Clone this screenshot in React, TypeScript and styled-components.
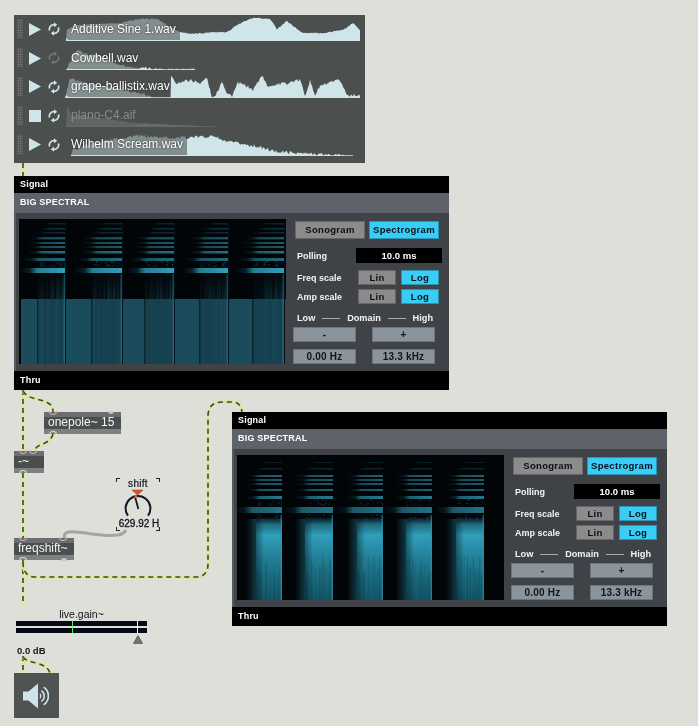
import styled, { createGlobalStyle } from 'styled-components'

const GlobalStyle = createGlobalStyle`
  html, body {
    margin: 0;
    padding: 0;
    background: #dedfd9;
  }
  body {
    font-family: "Liberation Sans", Arial, sans-serif;
  }
`

type Pt = [number, number]

// envelope points: [x px from wave start, height px]
const TRACKS: { name: string; chip: number; wave: Pt[]; jitter: number; stopped?: boolean }[] = [
  {
    name: 'Additive Sine 1.wav',
    chip: 114,
    jitter: 0.6,
    wave: [[1, 0], [2, 11], [12, 16], [32, 17], [55, 18], [75, 22], [92, 22], [102, 16], [115, 9], [128, 7], [148, 9], [162, 9], [172, 16], [182, 21], [188, 23], [205, 22], [212, 12], [222, 20], [232, 12], [238, 8], [258, 8], [278, 11], [288, 18], [295, 11]],
  },
  {
    name: 'Cowbell.wav',
    chip: 73,
    jitter: 1.3,
    wave: [[1, 0], [5, 8], [12, 20], [20, 16], [32, 14], [40, 11], [52, 6], [68, 2.5], [95, 1], [130, 0.7], [130, 0]],
  },
  {
    name: 'grape-ballistix.wav',
    chip: 105,
    jitter: 1.6,
    wave: [[0, 0], [5, 20], [28, 13], [52, 10], [82, 3], [88, 0], [105, 0], [105.5, 23], [110, 15], [125, 18], [135, 15], [142, 20], [147, 0], [150, 1], [157, 17], [162, 5], [167, 2], [173, 15], [182, 12], [188, 8], [197, 23], [202, 12], [222, 15], [235, 18], [240, 3], [245, 17], [250, 3], [255, 12], [275, 18], [282, 3], [295, 3]],
  },
  {
    name: 'plano-C4.aif',
    chip: 70,
    jitter: 0.3,
    stopped: true,
    wave: [[1, 0], [2, 22], [6, 12], [35, 9], [70, 4], [115, 2], [150, 0]],
  },
  {
    name: 'Wilhelm Scream.wav',
    chip: 121,
    jitter: 1.6,
    wave: [[6, 0], [8, 6], [30, 14], [70, 20], [110, 18], [150, 20], [158, 15], [190, 10], [208, 5], [230, 3], [250, 2], [270, 1], [288, 0]],
  },
]

function noise(seed: number) {
  const v = Math.sin(seed * 127.1 + 311.7) * 43758.5453
  return v - Math.floor(v)
}

function wavePoints(wave: Pt[], jitter: number, row: number) {
  const pts: string[] = []
  const end = wave[wave.length - 1][0]
  pts.push(`${wave[0][0]},26`)
  for (let x = wave[0][0]; x <= end; x += 1) {
    const i = wave.findIndex((p) => p[0] >= x)
    const b = wave[Math.max(i, 0)]
    const a = wave[Math.max(i - 1, 0)]
    const t = b[0] === a[0] ? 1 : (x - a[0]) / (b[0] - a[0])
    const h = a[1] + (b[1] - a[1]) * t
    const j = h > 0.5 ? (noise(x + row * 50) - 0.5) * jitter * 2 : 0
    pts.push(`${x},${(26 - Math.max(h + j, 0.8)).toFixed(1)}`)
  }
  pts.push(`${end},26`)
  return pts.join(' ')
}

function LoopIcon() {
  return (
    <svg width="12" height="14" viewBox="0 0 12 14">
      <path d="M1.6 8.6A4.6 4.6 0 0 1 6.6 2.6" fill="none" stroke="currentColor" strokeWidth="1.7" />
      <path d="M6 0.2 9.2 2.8 6 5.2Z" fill="currentColor" />
      <path d="M10.4 5.4A4.6 4.6 0 0 1 5.4 11.4" fill="none" stroke="currentColor" strokeWidth="1.7" />
      <path d="M6 8.8 2.8 11.2 6 13.8Z" fill="currentColor" />
    </svg>
  )
}

function Playlist() {
  return (
    <PlaylistWrap>
      {TRACKS.map((t, i) => (
        <TrackRow key={t.name}>
          <Grip />
          <TransportSlot>
            {t.stopped ? (
              <StopIcon />
            ) : (
              <svg width="12" height="13" viewBox="0 0 12 13">
                <path d="M0 0 12 6.5 0 13Z" fill="#cfe5ea" />
              </svg>
            )}
          </TransportSlot>
          <LoopSlot $dim={t.name === 'Cowbell.wav'}>
            <LoopIcon />
          </LoopSlot>
          <WaveSlot>
            <svg width="295" height="26" viewBox="0 0 295 26">
              <polygon points={wavePoints(t.wave, t.jitter, i)} fill={t.stopped ? '#656b6a' : '#cfe5ea'} />
            </svg>
            <TrackLabel $muted={t.stopped} $chip={t.chip}>
              {t.name}
            </TrackLabel>
          </WaveSlot>
        </TrackRow>
      ))}
    </PlaylistWrap>
  )
}

type Band = { y: number; h: number; o: number; back?: number; inset?: number }

type SpecConfig = {
  id: string
  starts: number[]
  ends: number[]
  bands: Band[]
  bright: boolean
}

const SPEC_A: SpecConfig = {
  id: 'a',
  starts: [19, 73, 126, 181, 234],
  ends: [46, 103, 155, 209, 265],
  bands: [
    { y: 4, h: 1.5, o: 0.2, inset: 14 },
    { y: 9, h: 1.5, o: 0.3, inset: 10 },
    { y: 13, h: 1.5, o: 0.25, inset: 6 },
    { y: 18, h: 2.5, o: 0.5 },
    { y: 23, h: 2, o: 0.55 },
    { y: 27, h: 2, o: 0.55 },
    { y: 32, h: 2.5, o: 0.7 },
    { y: 39, h: 3, o: 0.65, back: 6 },
    { y: 49, h: 5, o: 1, back: 8 },
  ],
  bright: false,
}

const SPEC_B: SpecConfig = {
  id: 'b',
  starts: [19, 68, 120, 169, 219],
  ends: [45, 96, 146, 195, 247],
  bands: [
    { y: 7, h: 1, o: 0.18, inset: 12 },
    { y: 13, h: 1.5, o: 0.22, inset: 6 },
    { y: 20, h: 2, o: 0.6 },
    { y: 24, h: 2, o: 0.55 },
    { y: 28, h: 2, o: 0.55 },
    { y: 34, h: 2, o: 0.6 },
    { y: 41, h: 3, o: 0.75 },
    { y: 52, h: 6, o: 0.7, back: 12 },
  ],
  bright: true,
}

function Spectrogram({ config }: { config: SpecConfig }) {
  const { id, starts, ends, bands, bright } = config
  return (
    <svg width="267" height="145" viewBox="0 0 267 145">
      <defs>
        <linearGradient id={`fade-${id}`} x1="0" x2="1" y1="0" y2="0">
          <stop offset="0" stopColor="#2f9bb3" stopOpacity="0" />
          <stop offset="0.22" stopColor="#2f9bb3" stopOpacity="0.18" />
          <stop offset="0.38" stopColor="#2f9bb3" stopOpacity="0.8" />
          <stop offset="1" stopColor="#32a0ba" stopOpacity="1" />
        </linearGradient>
        <linearGradient id={`tail-${id}`} x1="0" x2="0" y1="0" y2="1">
          <stop offset="0" stopColor="#1f7389" stopOpacity="0.15" />
          <stop offset="1" stopColor="#1f7389" stopOpacity="1" />
        </linearGradient>
        <linearGradient id={`glow-${id}`} x1="0" x2="0" y1="0" y2="1">
          <stop offset="0" stopColor="#2f9fbb" stopOpacity="0" />
          <stop offset="0.09" stopColor="#2d97b2" stopOpacity="0.7" />
          <stop offset="0.22" stopColor="#2f9fbb" stopOpacity="1" />
          <stop offset="0.5" stopColor="#237f96" stopOpacity="1" />
          <stop offset="1" stopColor="#15586b" stopOpacity="1" />
        </linearGradient>
        <linearGradient id={`apron-${id}`} x1="0" x2="1" y1="0" y2="0">
          <stop offset="0" stopColor="#1c6a80" stopOpacity="0" />
          <stop offset="1" stopColor="#1c6a80" stopOpacity="0.5" />
        </linearGradient>
        <linearGradient id={`side-${id}`} x1="0" x2="1" y1="0" y2="0">
          <stop offset="0" stopColor="#03141a" stopOpacity="0.45" />
          <stop offset="1" stopColor="#03141a" stopOpacity="0" />
        </linearGradient>
      </defs>
      <rect width="267" height="145" fill="#020508" />
      {!bright && <rect x="2" y="80" width="265" height="65" fill="#1b4c5b" />}
      {starts.map((s, i) => {
        const e = ends[i]
        const w = e - s
        const columns = Array.from({ length: w }, (_, k) => k)
        return (
          <g key={s}>
            {bands.map((b) => {
              const left = s - 10 - (b.back ?? 0) + (b.inset ?? 0)
              return <rect key={b.y} x={left} y={b.y} width={e - left} height={b.h} fill={`url(#fade-${id})`} opacity={b.o} />
            })}
            {Array.from({ length: 30 }, (_, k) => k).map((k) => (
              <rect
                key={`n${k}`}
                x={s + noise(k + i * 40) * w}
                y={bright ? (k % 2 ? 44 + noise(k * 3 + i) * 6 : 59 + noise(k * 3 + i) * 6) : 42 + noise(k * 3 + i) * 5}
                width={1.5}
                height={1.2}
                fill="#1f7389"
                opacity={0.15 + noise(k * 7) * 0.3}
              />
            ))}
            {bright ? (
              <>
                <rect x={s - 10} y={64} width={10} height={81} fill={`url(#apron-${id})`} />
                <rect x={s} y={62} width={w} height={83} fill={`url(#glow-${id})`} />
                <rect x={s} y={64} width={8} height={81} fill={`url(#side-${id})`} />
                {columns.map((k) => (
                  <rect
                    key={`s${k}`}
                    x={s + k}
                    y={100 + noise(k * 3 + i) * 20}
                    width={1}
                    height={45}
                    fill="#03181f"
                    opacity={noise(k * 2 + i * 11) * 0.18}
                  />
                ))}
              </>
            ) : (
              <>
                {columns.map((k) => (
                  <rect
                    key={`t${k}`}
                    x={s + k}
                    y={55}
                    width={1}
                    height={25}
                    fill={`url(#tail-${id})`}
                    opacity={(0.1 + noise(k * 5 + i * 3) * 0.4) * (0.3 + (0.7 * k) / w)}
                  />
                ))}
                <rect x={s} y={80} width={w} height={65} fill="#173f4d" opacity={0.75} />
                <rect x={s - 1} y={80} width={1.5} height={65} fill="#0c2630" />
                {columns.map((k) => (
                  <rect
                    key={`s${k}`}
                    x={s + k}
                    y={80}
                    width={1}
                    height={65}
                    fill={noise(k * 2 + i * 11) > 0.7 ? '#1f6a7e' : '#0f303b'}
                    opacity={noise(k + i * 5) * 0.18}
                  />
                ))}
              </>
            )}
            <rect x={e - 1.5} y={bright ? 60 : 55} width={1.5} height={bright ? 85 : 90} fill="#2f93ac" opacity={bright ? 0.6 : 0.4} />
            {!bright && <rect x={e} y={4} width={1} height={141} fill="#04121a" />}
          </g>
        )
      })}
    </svg>
  )
}

function SpectralPanel({ x, y, config }: { x: number; y: number; config: SpecConfig }) {
  return (
    <Panel $x={x} $y={y}>
      <BlackBar>Signal</BlackBar>
      <TitleBar>BIG SPECTRAL</TitleBar>
      <PanelBody>
        <Display>
          <Spectrogram config={config} />
        </Display>
        <Controls>
          <ModeRow>
            <Toggle $w={70} $h={18}>Sonogram</Toggle>
            <Toggle $w={70} $h={18} $active>Spectrogram</Toggle>
          </ModeRow>
          <PollingRow>
            <RowLabel>Polling</RowLabel>
            <PollValue>10.0 ms</PollValue>
          </PollingRow>
          <ScaleGroup>
            <ScaleRow>
              <RowLabel>Freq scale</RowLabel>
              <ScaleButtons>
                <Toggle $w={38} $h={15}>Lin</Toggle>
                <Toggle $w={38} $h={15} $active>Log</Toggle>
              </ScaleButtons>
            </ScaleRow>
            <ScaleRow>
              <RowLabel>Amp scale</RowLabel>
              <ScaleButtons>
                <Toggle $w={38} $h={15}>Lin</Toggle>
                <Toggle $w={38} $h={15} $active>Log</Toggle>
              </ScaleButtons>
            </ScaleRow>
          </ScaleGroup>
          <DomainRow>
            <span>Low</span>
            <DomainRule />
            <span>Domain</span>
            <DomainRule />
            <span>High</span>
          </DomainRow>
          <RangeGrid>
            <RangeCell>-</RangeCell>
            <RangeCell>+</RangeCell>
            <RangeCell>0.00 Hz</RangeCell>
            <RangeCell>13.3 kHz</RangeCell>
          </RangeGrid>
        </Controls>
      </PanelBody>
      <BlackBar $tall>Thru</BlackBar>
    </Panel>
  )
}

const CORDS = [
  'M23 163V176',
  'M23 390V451',
  'M23 391C28 400 40 398 48 403C52 405 53 408 53 412',
  'M53 434C51 443 40 444 37 447C35 449 34 450 34 451',
  'M23 473V538',
  'M23 560V605',
  'M23 562C23 572 27 577 36 577H196C204 577 208 572 208 564V416C208 407 213 402 222 402H232C238 402 241 405 242 412',
  'M23 656V673',
  'M23 657C26 662 36 662 42 665C47 667 49 670 50 673',
]

function PatchCords() {
  return (
    <CordLayer width="698" height="726" viewBox="0 0 698 726">
      {CORDS.map((d) => (
        <g key={d} fill="none">
          <path d={d} stroke="#d9ea93" strokeWidth="3" />
          <path d={d} stroke="#3c4632" strokeWidth="1.6" strokeDasharray="5 4" />
        </g>
      ))}
      <path d="M64 538C64 532 68 531 76 532C90 533 105 537 118 535C123 534 125 532 126 530" fill="none" stroke="#a3a5a0" strokeWidth="3" />
    </CordLayer>
  )
}

function Dial() {
  return (
    <DialNode>
      <DialCaption>shift</DialCaption>
      <svg width="46" height="34" viewBox="0 0 46 34">
        <path d="M17 1H28L22.5 6Z" fill="#e0501f" stroke="#8a3a1c" strokeWidth="0.5" />
        <path d="M13 26.7A12.4 12.4 0 1 1 33 26.7" fill="none" stroke="#10182a" strokeWidth="2" />
        <path d="M23.4 20 20.2 8.5" stroke="#10182a" strokeWidth="1.8" />
        <circle cx="21" cy="7.7" r="1.4" fill="#f0632a" />
      </svg>
      <DialValue>629.92 H</DialValue>
      <DialCorner $top $left />
      <DialCorner $top />
      <DialCorner $left />
      <DialCorner />
    </DialNode>
  )
}

function Meter() {
  return (
    <MeterNode>
      <MeterCaption>live.gain~</MeterCaption>
      <MeterBars>
        <MeterBar />
        <MeterBar />
        <MeterTick $at={56} $color="#5cf06a" />
        <MeterTick $at={121} $color="#f4f4f4" />
      </MeterBars>
      <MeterThumb>
        <svg width="10" height="9" viewBox="0 0 10 9">
          <path d="M5 0.5 9.6 8.6H0.4Z" fill="#6f726f" stroke="#4a4c4a" strokeWidth="0.7" />
        </svg>
      </MeterThumb>
      <MeterValue>0.0 dB</MeterValue>
    </MeterNode>
  )
}

export default function App() {
  return (
    <>
      <GlobalStyle />
      <Patcher>
        <PatchCords />
        <Playlist />
        <SpectralPanel x={14} y={176} config={SPEC_A} />
        <SpectralPanel x={232} y={412} config={SPEC_B} />

        <ObjectBox $x={44} $y={412} $w={77}>
          onepole~ 15
          <Port $at={5} $side="top" />
          <Port $at={64} $side="top" $grey />
          <Port $at={5} $side="bottom" $green />
        </ObjectBox>
        <ObjectBox $x={14} $y={451} $w={30}>
          -~
          <Port $at={5} $side="top" />
          <Port $at={15} $side="top" />
          <Port $at={5} $side="bottom" $green />
        </ObjectBox>
        <ObjectBox $x={14} $y={538} $w={60}>
          freqshift~
          <Port $at={5} $side="top" />
          <Port $at={45} $side="top" />
          <Port $at={5} $side="bottom" $green />
          <Port $at={47} $side="bottom" $grey />
        </ObjectBox>

        <Dial />
        <Meter />

        <SpeakerButton>
          <svg width="29" height="26" viewBox="0 0 29 26">
            <path d="M0 8.5H5.5L15 0.5V25.5L5.5 17.5H0Z" fill="#cfe5ea" />
            <path d="M16.8 10.8A3 3 0 0 1 16.8 15.2" fill="none" stroke="#cfe5ea" strokeWidth="1.4" />
            <path d="M18.4 7.6A6.5 6.5 0 0 1 18.4 18.4" fill="none" stroke="#cfe5ea" strokeWidth="1.5" />
            <path d="M20.6 4.2A10.5 10.5 0 0 1 20.6 21.8" fill="none" stroke="#cfe5ea" strokeWidth="1.6" />
          </svg>
        </SpeakerButton>
      </Patcher>
    </>
  )
}

const Patcher = styled.div`
  position: relative;
  width: 698px;
  height: 726px;
  overflow: hidden;
  background: #dedfd9;
  filter: blur(0.3px);
`

const CordLayer = styled.svg`
  position: absolute;
  left: 0;
  top: 0;
`

const PlaylistWrap = styled.div`
  position: absolute;
  left: 14px;
  top: 15px;
  width: 351px;
  height: 148px;
  background: #4b4f4e;
  display: flex;
  flex-direction: column;
`

const TrackRow = styled.div`
  display: flex;
  align-items: center;
  height: 28.8px;
  flex: none;
  padding-left: 3px;
`

const Grip = styled.div`
  width: 6px;
  height: 19px;
  margin-top: -1px;
  background-image: radial-gradient(circle, #6f7372 0.8px, transparent 1px);
  background-size: 2.5px 2.5px;
`

const TransportSlot = styled.div`
  width: 13px;
  margin-left: 5px;
  display: flex;
  justify-content: center;
  line-height: 0;
`

const StopIcon = styled.div`
  width: 12px;
  height: 12px;
  background: #cfe5ea;
`

const LoopSlot = styled.div<{ $dim?: boolean }>`
  width: 12px;
  margin-left: 7px;
  line-height: 0;
  color: ${(p) => (p.$dim ? '#6f7674' : '#cfe5ea')};
`

const WaveSlot = styled.div`
  position: relative;
  width: 295px;
  height: 26px;
  margin: -3px 0 0 5px;
  line-height: 0;
`

const TrackLabel = styled.div<{ $muted?: boolean; $chip: number }>`
  position: absolute;
  left: 1px;
  top: 2px;
  width: ${(p) => p.$chip}px;
  height: 23px;
  box-sizing: border-box;
  padding-left: 5px;
  border-radius: 4px 0 0 4px;
  white-space: nowrap;
  background: rgba(75, 79, 78, ${(p) => (p.$muted ? 0.2 : 0.58)});
  color: ${(p) => (p.$muted ? '#868c8b' : '#ffffff')};
  font-size: 12px;
  line-height: 25px;
  text-shadow: ${(p) => (p.$muted ? 'none' : '0 0 2px rgba(30, 34, 34, 0.9)')};
`

const Panel = styled.div<{ $x: number; $y: number }>`
  position: absolute;
  left: ${(p) => p.$x}px;
  top: ${(p) => p.$y}px;
  width: 435px;
  height: 214px;
  display: flex;
  flex-direction: column;
  background: #000;
  color: #fff;
`

const BlackBar = styled.div<{ $tall?: boolean }>`
  height: ${(p) => (p.$tall ? 19 : 17)}px;
  flex: none;
  padding-left: 6px;
  background: #000;
  font-size: 9px;
  font-weight: 700;
  line-height: ${(p) => (p.$tall ? 18 : 16)}px;
  letter-spacing: 0.2px;
`

const TitleBar = styled.div`
  height: 20px;
  flex: none;
  padding-left: 6px;
  background: #5e626b;
  font-size: 9px;
  font-weight: 700;
  line-height: 19px;
  letter-spacing: 0.2px;
`

const PanelBody = styled.div`
  flex: 1;
  display: flex;
  margin-left: 2px;
  background: #3f4246;
  box-shadow: -2px 0 0 #565a62;
`

const Display = styled.div`
  width: 267px;
  height: 145px;
  margin: 6px 0 0 3px;
  line-height: 0;
  overflow: hidden;
  background: #020508;
  svg {
    filter: blur(0.5px);
  }
`

const Controls = styled.div`
  flex: 1;
  display: flex;
  flex-direction: column;
  padding: 8px 0 0 7px;
`

const ModeRow = styled.div`
  display: flex;
  gap: 4px;
  margin-left: 2px;
`

const Toggle = styled.div<{ $active?: boolean; $w: number; $h: number }>`
  width: ${(p) => p.$w}px;
  height: ${(p) => p.$h}px;
  box-sizing: border-box;
  border: 1px solid ${(p) => (p.$active ? '#2d94b0' : '#666')};
  background: ${(p) => (p.$active ? '#37cdf6' : '#8b8b8b')};
  color: #0c0f14;
  font-size: 9.5px;
  font-weight: 700;
  line-height: ${(p) => p.$h - 2}px;
  text-align: center;
  letter-spacing: 0.3px;
  white-space: nowrap;
`

const PollingRow = styled.div`
  display: flex;
  align-items: center;
  justify-content: space-between;
  margin: 9px 7px 0 4px;
  height: 15px;
`

const RowLabel = styled.span`
  font-size: 9px;
  font-weight: 700;
  color: #f2f2f2;
  white-space: nowrap;
`

const PollValue = styled.div`
  width: 86px;
  height: 15px;
  background: #000;
  font-size: 9.5px;
  font-weight: 700;
  line-height: 15px;
  text-align: center;
`

const ScaleGroup = styled.div`
  display: flex;
  flex-direction: column;
  gap: 4px;
  margin: 7px 10px 0 4px;
`

const ScaleRow = styled.div`
  display: flex;
  align-items: center;
  justify-content: space-between;
`

const ScaleButtons = styled.div`
  display: flex;
  gap: 5px;
`

const DomainRow = styled.div`
  display: flex;
  align-items: center;
  gap: 7px;
  height: 14px;
  margin: 7px 0 0 4px;
  width: 136px;
  font-size: 9.2px;
  font-weight: 700;
  color: #f2f2f2;
`

const DomainRule = styled.i`
  flex: 1;
  height: 1px;
  background: #a8aaad;
`

const RangeGrid = styled.div`
  display: grid;
  grid-template-columns: 63px 63px;
  column-gap: 16px;
  row-gap: 7px;
  margin-top: 2px;
`

const RangeCell = styled.div`
  height: 15px;
  box-sizing: border-box;
  border: 1px solid #6e747b;
  background: #8b939c;
  color: #11151b;
  font-size: 10px;
  font-weight: 700;
  line-height: 13px;
  text-align: center;
  letter-spacing: 0.2px;
`

const ObjectBox = styled.div<{ $x: number; $y: number; $w: number }>`
  position: absolute;
  left: ${(p) => p.$x}px;
  top: ${(p) => p.$y}px;
  width: ${(p) => p.$w}px;
  height: 22px;
  box-sizing: border-box;
  padding-left: 4px;
  background: linear-gradient(#6a6e70 0 5px, #4a4e4d 5px 17px, #7c8082 17px);
  color: #f4f4f4;
  font-size: 12px;
  line-height: 21px;
  white-space: nowrap;
`

const Port = styled.i<{ $at: number; $side: 'top' | 'bottom'; $green?: boolean; $grey?: boolean }>`
  position: absolute;
  left: ${(p) => p.$at}px;
  ${(p) => (p.$side === 'top' ? 'top: -1px;' : 'bottom: -1px;')}
  width: 6px;
  height: 3px;
  border-radius: ${(p) => (p.$side === 'top' ? '0 0 4px 4px' : '4px 4px 0 0')};
  ${(p) => (p.$grey ? 'background: #c8c9c4;' : '')}
  ${(p) => (p.$grey ? '' : `border: 1px solid ${p.$green ? '#dbe99a' : '#dfa8a0'};`)}
  ${(p) => (p.$grey ? '' : p.$side === 'top' ? 'border-top: 0;' : 'border-bottom: 0;')}
`

const DialNode = styled.div`
  position: absolute;
  left: 116px;
  top: 478px;
  width: 44px;
  height: 52px;
  display: flex;
  flex-direction: column;
  align-items: center;
  color: #10141c;
  svg {
    flex: none;
    margin-top: -1px;
  }
`

const DialCaption = styled.div`
  height: 13px;
  font-size: 10px;
  line-height: 12px;
  letter-spacing: 0.3px;
  -webkit-text-stroke: 0.2px #10141c;
`

const DialValue = styled.div`
  margin-top: -5px;
  padding-left: 2px;
  font-size: 10px;
  line-height: 12px;
  white-space: nowrap;
  -webkit-text-stroke: 0.3px #10141c;
`

const DialCorner = styled.i<{ $top?: boolean; $left?: boolean }>`
  position: absolute;
  ${(p) => (p.$top ? 'top: 0;' : 'bottom: -1px;')}
  ${(p) => (p.$left ? 'left: 0;' : 'right: 0;')}
  width: 3px;
  height: 3px;
  border: 0 solid #222;
  ${(p) => (p.$top ? 'border-top-width: 1px;' : 'border-bottom-width: 1px;')}
  ${(p) => (p.$left ? 'border-left-width: 1px;' : 'border-right-width: 1px;')}
`

const MeterNode = styled.div`
  position: absolute;
  left: 16px;
  top: 608px;
  width: 131px;
  color: #10141c;
`

const MeterCaption = styled.div`
  height: 13px;
  font-size: 10.5px;
  line-height: 12px;
  text-align: center;
`

const MeterBars = styled.div`
  position: relative;
  display: flex;
  flex-direction: column;
  gap: 2px;
`

const MeterBar = styled.div`
  height: 5px;
  background: #050a18;
`

const MeterTick = styled.i<{ $at: number; $color: string }>`
  position: absolute;
  left: ${(p) => p.$at}px;
  top: 0;
  bottom: 0;
  width: 1px;
  background: ${(p) => p.$color};
`

const MeterThumb = styled.div`
  height: 9px;
  margin: 2px 0 0 117px;
  line-height: 0;
`

const MeterValue = styled.div`
  margin: 1px 0 0 1px;
  font-size: 9.5px;
  font-weight: 700;
  line-height: 12px;
`

const SpeakerButton = styled.div`
  position: absolute;
  left: 14px;
  top: 673px;
  width: 45px;
  height: 45px;
  box-sizing: border-box;
  padding-left: 9px;
  display: flex;
  align-items: center;
  background: #4f5351;
`
